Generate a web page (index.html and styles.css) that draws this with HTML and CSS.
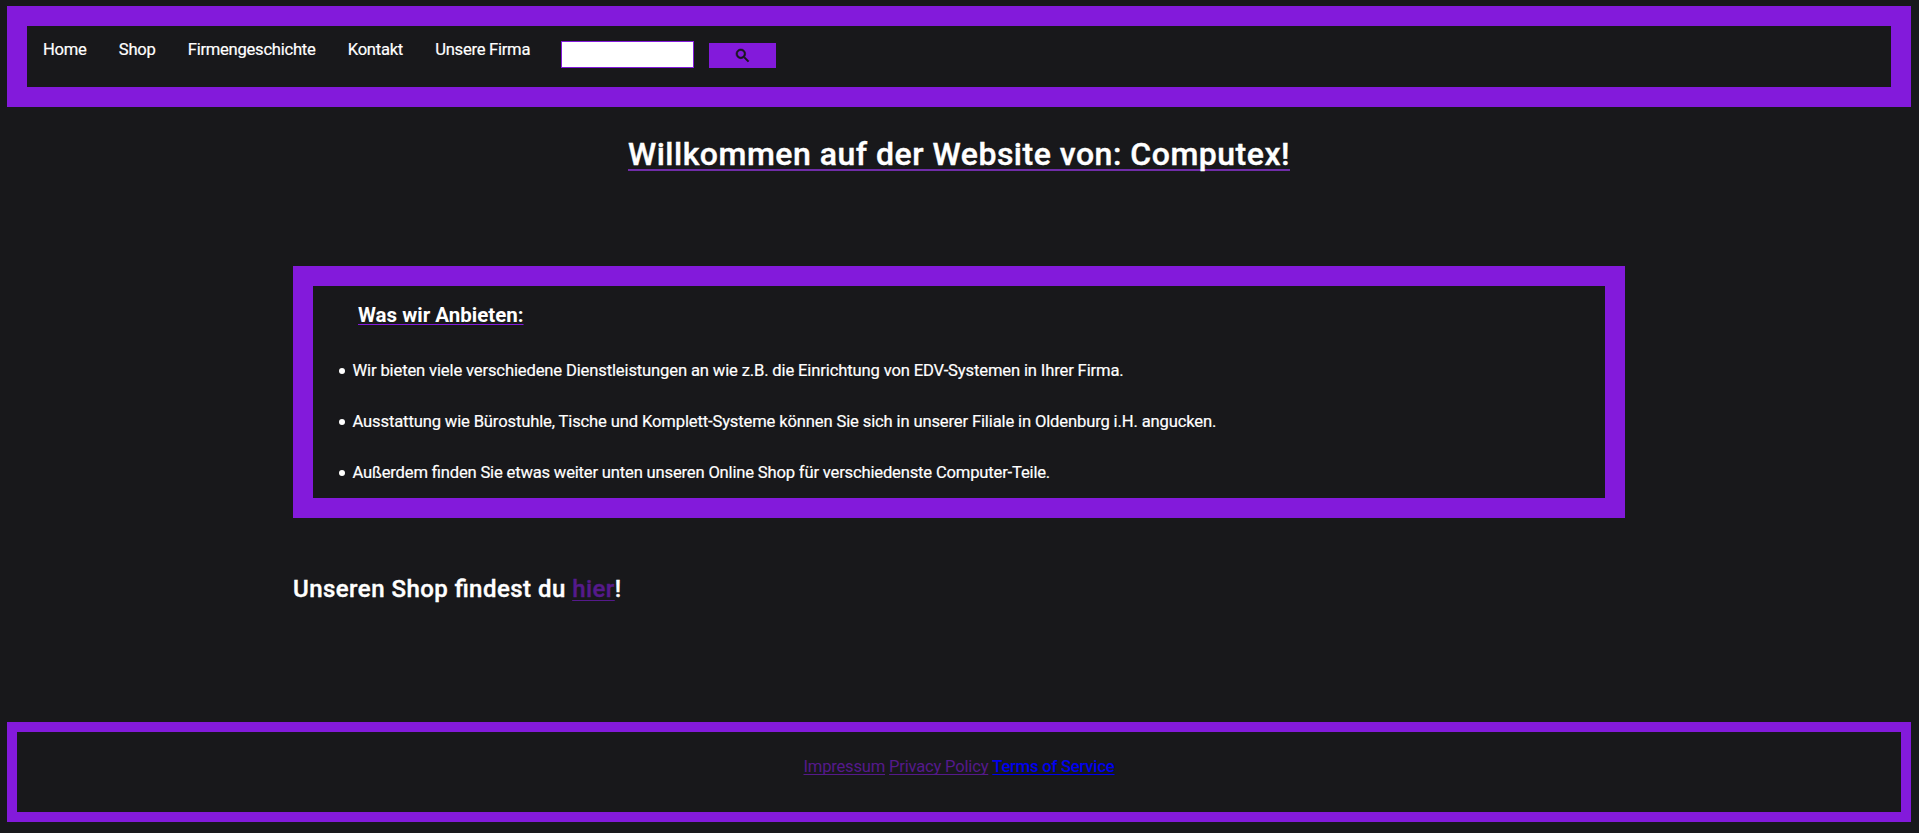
FILE: index.html
```html
<!DOCTYPE html>
<html lang="de">
<head>
<meta charset="utf-8">
<title>Computex</title>
<link rel="stylesheet" href="styles.css">
</head>
<body>
<header class="header">
  <nav class="nav">
    <a class="nav-link">Home</a>
    <a class="nav-link">Shop</a>
    <a class="nav-link">Firmengeschichte</a>
    <a class="nav-link">Kontakt</a>
    <a class="nav-link">Unsere Firma</a>
  </nav>
  <form class="search">
    <input class="search-input" type="text" aria-label="Suche">
    <button class="search-button" type="button" aria-label="Suchen">
      <svg class="search-icon" viewBox="3 3 17.5 17.5"><path d="M15.5 14h-.79l-.28-.27A6.47 6.47 0 0 0 16 9.5 6.5 6.5 0 1 0 9.5 16c1.61 0 3.09-.59 4.23-1.57l.27.28v.79l5 4.99L20.49 19l-4.99-5zm-6 0C7.01 14 5 11.99 5 9.5S7.01 5 9.5 5 14 7.01 14 9.5 11.99 14 9.5 14z"/></svg>
    </button>
  </form>
</header>
<main class="main">
  <h1 class="title"><span class="title-text">Willkommen auf der Website von: Computex!</span></h1>
  <section class="offer">
    <h2 class="offer-title"><span class="offer-title-text">Was wir Anbieten:</span></h2>
    <ul class="offer-list">
      <li class="offer-item"><span class="offer-text">Wir bieten viele verschiedene Dienstleistungen an wie z.B. die Einrichtung von EDV-Systemen in Ihrer Firma.</span></li>
      <li class="offer-item"><span class="offer-text">Ausstattung wie Bürostuhle, Tische und Komplett-Systeme können Sie sich in unserer Filiale in Oldenburg i.H. angucken.</span></li>
      <li class="offer-item offer-item-tight"><span class="offer-text">Außerdem finden Sie etwas weiter unten unseren Online Shop für verschiedenste Computer-Teile.</span></li>
    </ul>
  </section>
  <p class="shop-line">Unseren Shop findest du <a class="shop-link">hier</a>!</p>
</main>
<footer class="footer">
  <a class="footer-link">Impressum</a>
  <a class="footer-link">Privacy Policy</a>
  <a class="footer-link footer-link-new">Terms of Service</a>
</footer>
</body>
</html>
```

FILE: styles.css
```css
* { box-sizing: border-box; }
html { background: #18181b; }
body {
  margin: 0;
  padding: 6px 8px 0 7px;
  height: 833px;
  overflow: hidden;
  font: 400 16.6px/20px Roboto, sans-serif;
  font-feature-settings: "liga" 1;
  letter-spacing: -0.145px;
  color: #fff;
}
.header {
  display: flex;
  align-items: flex-start;
  height: 101px;
  border: 20px solid #831adb;
  padding: 13px 16px 0;
}
.nav { display: flex; gap: 32.2px; width: 518px; padding-top: 1px; white-space: nowrap; letter-spacing: -0.26px; -webkit-text-stroke: 0.2px #fff; }
.search { display: flex; }
.search-input {
  width: 133px;
  height: 27px;
  margin: 2px 0 0;
  padding: 0;
  border: 1px solid #831adb;
  background: #fff;
}
.search-button {
  display: grid;
  place-items: center;
  width: 67px;
  height: 25px;
  margin: 4px 0 0 15px;
  padding: 0;
  border: 0;
  background: #831adb;
}
.search-icon { width: 13px; height: 13px; fill: #18181b; stroke: #18181b; stroke-width: 0.8; overflow: visible; }
.main { width: 1332px; margin: 0 auto; }
.title { margin: 28px 0 0; height: 131px; font-size: 32px; line-height: 38px; font-weight: 500; letter-spacing: 0.51px; text-align: center; -webkit-text-stroke: 0.4px #fff; }
.title-text { text-decoration: underline #6f2da8 2px; text-underline-offset: 4px; text-decoration-skip-ink: none; }
.offer { height: 252px; border: 20px solid #831adb; padding: 16px 25px 0; }
.offer-title { margin: 0 0 0 20px; font-size: 20.5px; line-height: 26px; font-weight: 700; letter-spacing: 0; }
.offer-title-text { text-decoration: underline #831adb 1px; text-underline-offset: 2px; text-decoration-skip-ink: none; }
.offer-list { margin: 32px 0 0; padding: 0; list-style: none; -webkit-text-stroke: 0.2px #fff; }
.offer-item { display: flex; align-items: center; gap: 8px; height: 20px; margin-bottom: 31px; padding-left: 0.5px; white-space: nowrap; }
.offer-item-tight { letter-spacing: -0.18px; }
.offer-text { padding-top: 2px; }
.offer-item::before { content: ""; width: 6px; height: 6px; margin-top: 2px; border-radius: 50%; background: #fff; }
.shop-line { margin: 56px 0 0; height: 148px; font-size: 24px; line-height: 30px; font-weight: 500; letter-spacing: 0.46px; -webkit-text-stroke: 0.4px; }
.shop-link { color: #551a8b; text-decoration: underline 1px; text-underline-offset: 3px; }
.footer {
  display: flex;
  justify-content: center;
  gap: 4px;
  height: 100px;
  border: 10px solid #831adb;
  padding-top: 25px;
  letter-spacing: -0.21px;
}
.footer-link { color: #551a8b; text-decoration: underline 1px; text-underline-offset: 2px; text-decoration-skip-ink: none; }
.footer-link-new { color: #0000ee; font-weight: 500; }
```
